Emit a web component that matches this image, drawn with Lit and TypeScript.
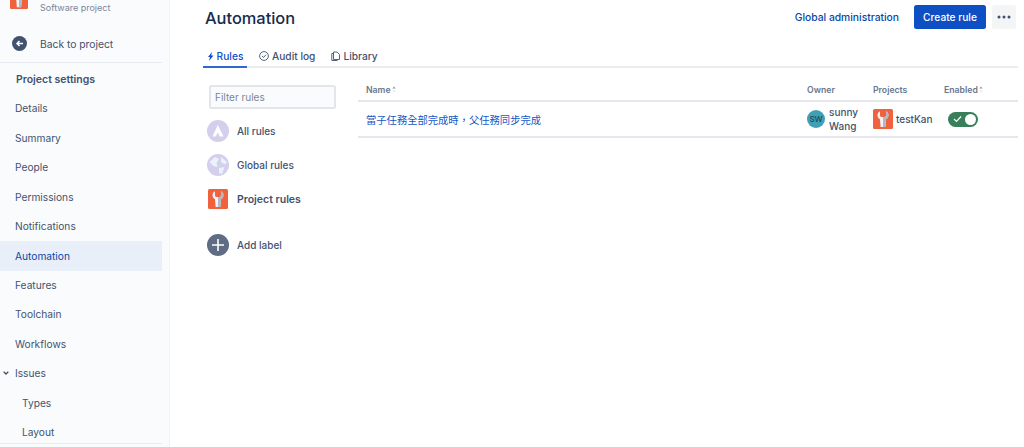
import { LitElement, html, css } from "lit";
import { customElement } from "lit/decorators.js";

const wrench = (size: number) => html`<svg class="proj" width=${size} height=${size} viewBox="0 0 20 20">
  <rect width="20" height="20" rx="1.5" fill="#f0623e"/>
  <path d="M7 2.2V6.4Q7 8 10 8Q13 8 13 6.4V2.2C16 3.6 16.6 8.2 13 10.2L12.4 18H7.6L7 10.2C3.4 8.2 4 3.6 7 2.2Z" fill="#f2f3f6"/>
  <path d="M10 8Q13 8 13 6.4V2.2C16 3.6 16.6 8.2 13 10.2L12.4 18H10Z" fill="#b3b8c4"/>
</svg>`;

const nav = ["Details", "Summary", "People", "Permissions", "Notifications", "Automation", "Features", "Toolchain", "Workflows"];

@customElement("app-root")
export class AppRoot extends LitElement {
  static styles = css`
    :host { display: block; width: 1024px; height: 447px; overflow: hidden; background: #fff;
      font-family: Inter, "Noto Sans CJK TC", sans-serif; font-size: 10.2px; color: #42526e; }
    * { box-sizing: border-box; }
    .page { display: flex; height: 447px; }
    .side { width: 170px; flex: none; background: #fafbfc; border-right: 1px solid #f1f2f5; padding-right: 7px; display: flex; flex-direction: column; }
    .brand { height: 15px; display: flex; align-items: flex-end; overflow: hidden; padding-left: 10px; gap: 12px; }
    .brand .proj { flex: none; margin-bottom: 6px; }
    .brand span { font-size: 9px; color: #7a869a; line-height: 14px; }
    .back { height: 48px; display: flex; align-items: center; padding: 9px 0 0 12px; gap: 13px; border-bottom: 1px solid #e8eaef; }
    .back span { position: relative; top: 1px; font-size: 10.3px; }
    .title { height: 31px; padding: 1px 0 0 16px; display: flex; align-items: center; font-weight: 600; font-size: 10.5px; color: #42526e; }
    .item { height: 29.45px; display: flex; align-items: center; padding: 0 0 1px 15px; }
    .item.on { background: #e9eff9; color: #0747a6; padding-bottom: 0; }
    .item.sub { padding-left: 22px; }
    .item.parent { padding-left: 3px; gap: 6px; }
    .rule { border-top: 1px solid #e8eaef; margin-top: -4px; }

    .main { flex: 1; min-width: 0; padding: 0 6px 0 34px; display: flex; flex-direction: column; }
    .head { height: 34px; display: flex; align-items: center; }
    h1 { margin: 1px 0 0 1px; font-size: 16.4px; font-weight: 500; color: #172b4d; flex: 1; }
    .global { color: #0747a6; margin-right: 15px; font-weight: 500; font-size: 10.3px; }
    .btn { height: 24px; display: flex; align-items: center; justify-content: center; border-radius: 2.5px; }
    .create { width: 72px; background: #0f4fc4; color: #fff; font-weight: 500; margin-right: 6px; font-size: 10.2px; }
    .more { width: 24px; background: #f4f5f7; margin-right: 2px; }
    .tabs { margin-top: 13px; height: 21px; display: flex; align-items: flex-start; border-bottom: 2px solid #ebecf0; font-size: 10.2px; }
    .tab { height: 21px; display: flex; align-items: center; gap: 3px; padding: 0 0 3px; font-weight: 500; }
    .tab.on { color: #0f4fc4; border-bottom: 2px solid #2f69cf; width: 44px; justify-content: center; margin: 0 12px 0 -1px; padding-bottom: 1px; }
    .tab.audit { margin-right: 16px; }
    .body { display: flex; }
    .rail { width: 154px; flex: none; padding: 17px 0 0 3px; }
    .filter { width: 127px; height: 24px; margin-left: 2px; border: 2px solid #e3e5ea; background: #fafbfc; border-radius: 2.5px; padding-left: 4px; display: flex; align-items: center; color: #7a869a; margin-bottom: 5px; font-size: 10px; }
    .lab { height: 34px; display: flex; align-items: center; gap: 8px; font-weight: 500; font-size: 10px; }
    .lab.bold { font-weight: 600; margin-bottom: 12px; font-size: 10.5px; gap: 9px; padding-left: 1px; }
    .lab .ic { width: 22px; height: 22px; flex: none; display: block; }
    .tbl { flex: 1; padding-top: 13px; }
    .row { display: grid; grid-template-columns: 441px 66px 71px 1fr; align-items: center; padding-left: 8px; }
    .hd { height: 21px; padding-bottom: 1px; border-bottom: 2px solid #e6e8ed; font-size: 8.7px; font-weight: 600; color: #6b778c; }
    .bd { height: 36px; border-bottom: 2px solid #e6e8ed; }
    .sort { display: inline-block; vertical-align: 0; margin-left: 1px; }
    .link { color: #1557c4; font-size: 10.3px; font-family: "Noto Sans CJK TC", sans-serif; }
    .cell { display: flex; align-items: center; gap: 4px; color: #42526e; font-weight: 500; font-size: 10px; line-height: 14.5px; }
    .cell.p { gap: 3px; }
    .av { width: 18px; height: 18px; border-radius: 50%; background: #3f9fb5; color: #1d4a5e; font-size: 8px; font-weight: 500; display: flex; align-items: center; justify-content: center; flex: none; }
    .toggle { width: 30px; height: 15px; border-radius: 7.5px; background: #37805a; margin-left: 4px; display: flex; align-items: center; justify-content: space-between; padding: 0 2px 0 5px; }
    .knob { width: 11px; height: 11px; border-radius: 50%; background: #fff; }
  `;

  private sort() {
    return html`<svg class="sort" width="4" height="7" viewBox="0 0 4 7"><path d="M2 .5 3.6 2.6H.4Z" fill="#8993a4"/><path d="M2 6.5 3.6 4.4H.4Z" fill="#dfe1e6"/></svg>`;
  }

  render() {
    return html`<div class="page">
      <aside class="side">
        <div class="brand">${wrench(18)}<span>Software project</span></div>
        <div class="back">
          <svg width="15" height="15" viewBox="0 0 15 15"><circle cx="7.5" cy="7.5" r="7.5" fill="#42526e"/><path d="M11 7.5H5M7.5 5 5 7.5 7.5 10" fill="none" stroke="#fff" stroke-width="1.5"/></svg>
          <span>Back to project</span>
        </div>
        <div class="title">Project settings</div>
        ${nav.map((n) => html`<div class="item ${n === "Automation" ? "on" : ""}">${n}</div>`)}
        <div class="item parent">
          <svg width="6" height="4" viewBox="0 0 6 4"><path d="M.7.7 3 3 5.3.7" fill="none" stroke="#42526e" stroke-width="1.3"/></svg>
          Issues
        </div>
        <div class="item sub">Types</div>
        <div class="item sub">Layout</div>
        <div class="rule"></div>
      </aside>
      <main class="main">
        <div class="head">
          <h1>Automation</h1>
          <span class="global">Global administration</span>
          <div class="btn create">Create rule</div>
          <div class="btn more"><svg width="14" height="4" viewBox="0 0 14 4"><circle cx="2" cy="2" r="1.5" fill="#42526e"/><circle cx="7" cy="2" r="1.5" fill="#42526e"/><circle cx="12" cy="2" r="1.5" fill="#42526e"/></svg></div>
        </div>
        <div class="tabs">
          <div class="tab on"><svg width="7" height="9" viewBox="0 0 7 9"><path d="M5 0 1 5H3L2 9 6.5 3.6H4.2Z" fill="#0f4fc4"/></svg>Rules</div>
          <div class="tab audit"><svg width="10" height="10" viewBox="0 0 10 10"><circle cx="5" cy="5" r="4.4" fill="none" stroke="#42526e" stroke-width=".9"/><path d="M3 5 4.5 6.5 7 3.7" fill="none" stroke="#42526e" stroke-width=".9"/></svg>Audit log</div>
          <div class="tab"><svg width="9" height="10" viewBox="0 0 9 10"><path d="M2.5 1H6L8.5 3.5V8.5H2.5ZM2.5 2.5H.8V9.5H6.5" fill="none" stroke="#42526e" stroke-width=".9"/></svg>Library</div>
        </div>
        <div class="body">
          <div class="rail">
            <div class="filter">Filter rules</div>
            <div class="lab"><svg class="ic" viewBox="0 0 22 22"><circle cx="11" cy="11" r="11" fill="#d3cfec"/><path d="M10.8 5 16.5 16.5H12.6L11 12.2 8.6 16.5H5.5Z" fill="#fff"/></svg>All rules</div>
            <div class="lab"><svg class="ic" viewBox="0 0 22 22"><circle cx="11" cy="11" r="11" fill="#d3cfec"/><path d="M2.5 8 8 3 12 5 9.5 9 10.5 13 6.5 12ZM14 3 20 8 18 10.5 14 8ZM12 14 17.5 13 15 20 12 19Z" fill="#eaf3fb"/></svg>Global rules</div>
            <div class="lab bold">${wrench(20)}Project rules</div>
            <div class="lab"><svg class="ic" viewBox="0 0 22 22"><circle cx="11" cy="11" r="11" fill="#5e6c84"/><path d="M11 5V17M5 11H17" stroke="#fff" stroke-width="1.6"/></svg>Add label</div>
          </div>
          <div class="tbl">
            <div class="row hd"><span>Name${this.sort()}</span><span>Owner</span><span>Projects</span><span>Enabled${this.sort()}</span></div>
            <div class="row bd">
              <span class="link">當子任務全部完成時，父任務同步完成</span>
              <div class="cell"><div class="av">SW</div><span>sunny<br>Wang</span></div>
              <div class="cell p">${wrench(20)}<span>testKan</span></div>
              <div class="toggle"><svg width="9" height="8" viewBox="0 0 9 8"><path d="M1 4 3.5 6.5 8 1.5" fill="none" stroke="#fff" stroke-width="1.2"/></svg><div class="knob"></div></div>
            </div>
          </div>
        </div>
      </main>
    </div>`;
  }
}
